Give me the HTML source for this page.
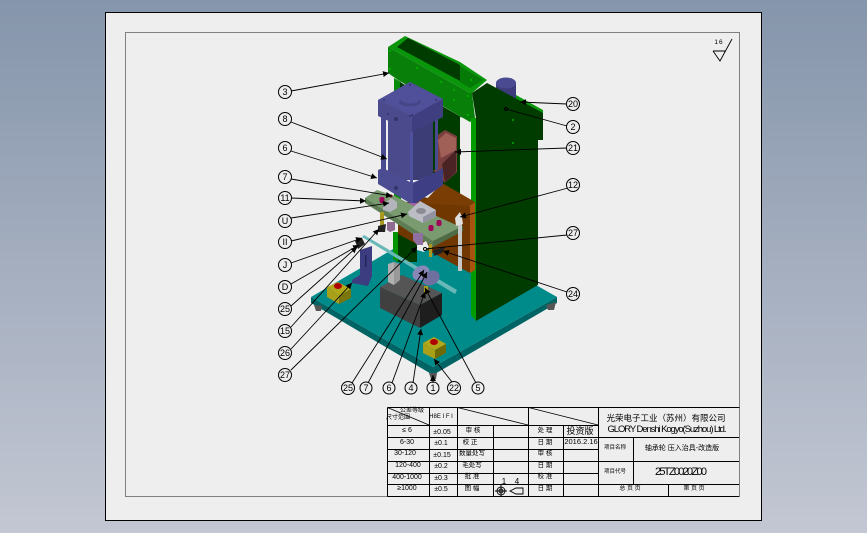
<!DOCTYPE html>
<html><head><meta charset="utf-8"><style>
html,body{margin:0;padding:0;width:867px;height:533px;overflow:hidden}
body{background:linear-gradient(180deg,#8595ab 0%,#c3c7d3 100%)}
svg{position:absolute;left:0;top:0;display:block}
.b text{font-family:"Liberation Sans",sans-serif;font-size:9px;text-anchor:middle;fill:#000}
.t text{font-family:"Liberation Sans","Noto Sans CJK SC",sans-serif;fill:#000;text-anchor:middle}
</style></head><body>
<svg width="867" height="533" viewBox="0 0 867 533">
<defs><marker id="a" markerUnits="userSpaceOnUse" markerWidth="7" markerHeight="6" refX="6" refY="3" orient="auto"><path d="M0,0 6,3 0,6Z" fill="#000"/></marker></defs>
<rect x="105.500" y="12.500" width="656" height="508" fill="#eeeeee" stroke="#000"/>
<rect x="125.500" y="32.500" width="614" height="464" fill="none" stroke="#808080"/>
<!-- base -->
<polygon points="311,297 311,303 433,375 557,303 557,297 433,367" fill="#006464"/>
<polygon points="311,297 395,248 471,248 557,297 433,367" fill="#008b8b"/>
<polygon points="314,305 322,306 321,311 316,311" fill="#555"/>
<polygon points="429,373 437,373 436,379 431,379" fill="#555"/>
<polygon points="546,305 556,302 554,310 548,310" fill="#555"/>
<!-- back posts -->
<polygon points="394,78 401,82 401,200 394,196" fill="#0a8a0a"/>
<polygon points="400,82 470,122 460,122 460,196 400,170" fill="#003c00"/>
<polygon points="460,117 471,120 471,205 460,200" fill="#eeeeee"/>
<polygon points="393,232 417,232 417,262 398,262 393,259" fill="#003c00"/>
<polygon points="393,232 398,232 398,262 393,259" fill="#009400"/>
<!-- beam -->
<polygon points="388,47 405,36 460,62 487,80 472,93 470,93" fill="#0a960a"/>
<polygon points="388,47 470,93 472,93 475,118 470,122 398,80 388,73" fill="#087f08"/>
<polygon points="397,47 408,38 460,65 460,81" fill="#003c00"/>
<polygon points="460,66 483,80 470,88 460,82" fill="#067a06"/>
<g fill="#00aa00"><circle cx="390" cy="51" r="1.200"/><circle cx="390" cy="69" r="1.200"/><circle cx="417" cy="68" r="1.200"/><circle cx="441" cy="82" r="1.200"/><circle cx="454" cy="90" r="1.200"/><circle cx="454" cy="100" r="1.200"/><circle cx="468" cy="96" r="1.200"/><circle cx="468" cy="115" r="1.200"/><circle cx="471" cy="80" r="1.200"/></g>
<!-- pin -->
<path d="M496,83 V92 L516,104 V83Z" fill="#3c3c7a"/>
<ellipse cx="506" cy="83" rx="10" ry="5.500" fill="#4a4a90"/>
<!-- right column -->
<polygon points="516,95 543,110 543,115 516,101" fill="#0a960a"/>
<polygon points="471,118 476,118 476,321 471,315" fill="#009c00"/>
<polygon points="472,93 487,83 543,113 543,140 538,140 538,285 476,321 476,118" fill="#003c00"/>
<circle cx="513" cy="120" r="1" fill="#00aa00"/><circle cx="513" cy="143" r="1" fill="#00aa00"/>
<!-- brown part -->
<polygon points="398,234 398,205 423,197 470,206 470,273" fill="#703800"/>
<polygon points="423,203 442,183 475,202 470,206" fill="#7a3e04"/>
<polygon points="470,206 475,202 475,270 470,273" fill="#a85410"/>
<!-- electronics -->
<polygon points="433,138 445,130 457,136 457,172 445,183 433,170" fill="#7a4040"/>
<polygon points="438,140 446,133 456,138 456,150 441,158" fill="#a06058"/>
<polygon points="442,164 456,150 456,172 445,183" fill="#4a2424"/>
<!-- cylinder -->
<rect x="381" y="117" width="5" height="56" fill="#4a4a90"/>
<rect x="386" y="117" width="2" height="56" fill="#eeeeee"/>
<rect x="433" y="112" width="2" height="58" fill="#003c00"/>
<rect x="435" y="110" width="3" height="60" fill="#4a4a90"/>
<rect x="388" y="118" width="45" height="62" fill="#3c3c76"/>
<rect x="388" y="118" width="22" height="62" fill="#4a4a8c"/>
<rect x="410" y="125" width="3" height="65" fill="#5050a0"/>
<polygon points="378,100 410,82 443,99 443,117 412,132 378,116" fill="#4a4a8c"/>
<polygon points="378,100 410,82 443,99 412,116" fill="#50509a"/>
<polygon points="412,116 443,99 443,117 412,132" fill="#3e3e80"/>
<ellipse cx="410" cy="102" rx="11" ry="4.500" fill="#454588"/>
<ellipse cx="410" cy="100" rx="9" ry="3.500" fill="#50509a"/>
<g fill="#33336c"><circle cx="410" cy="85" r="1"/><circle cx="384" cy="100" r="1"/><circle cx="436" cy="100" r="1"/><circle cx="412" cy="115" r="1"/><circle cx="388" cy="114" r="1"/><circle cx="410" cy="116" r="1"/><circle cx="396" cy="119" r="2"/></g>
<polygon points="378,170 383,168 412,183 433,174 443,168 443,185 413,205 378,184" fill="#4c4c92"/>
<polygon points="413,184 443,168 443,185 413,205" fill="#3e3e84"/>
<circle cx="396" cy="188" r="2" fill="#33336a"/>
<rect x="407" y="203" width="11" height="12" fill="#a060a8"/>
<!-- plate -->
<polygon points="365,198 377,190 395,196 412,205 463,228 433,245 365,202" fill="#7a9a70"/>
<polygon points="365,198 433,241 433,247 365,203" fill="#5f7d55"/>
<polygon points="433,241 463,226 463,231 433,247" fill="#4e6b46"/>
<polygon points="383,205 391,198 397,202 397,208 390,212 383,210" fill="#b4b4bc"/>
<polygon points="408,212 420,201 436,210 436,217 423,223 409,216" fill="#bcbcc4"/>
<polygon points="423,217 436,210 436,217 423,223" fill="#9292a0"/>
<ellipse cx="421" cy="211" rx="5" ry="3" fill="#8c8c94"/>
<g fill="#a0005a"><rect x="379.500" y="197" width="5" height="6" rx="2"/><rect x="428.500" y="225" width="5" height="6" rx="2"/><rect x="436.500" y="220" width="5" height="6" rx="2"/></g>
<circle cx="391" cy="196" r="1.500" fill="#800020"/>
<!-- guide posts -->
<rect x="380" y="212" width="4" height="20" fill="#a89a20"/>
<rect x="429" y="244" width="3" height="13" fill="#a89a20"/>
<rect x="458" y="215" width="4" height="56" fill="#c8c8c8"/>
<polygon points="455,218 460,212 462,218 463,224 456,226" fill="#e0e0e0"/>
<polygon points="417,246 426,241 429,247 424,252 417,250" fill="#eeeeee"/>
<polygon points="433,250 445,247 442,253 434,256" fill="#202020"/>
<polygon points="387,222 395,222 395,230 390,232 387,230" fill="#8f6b90"/>
<polygon points="413,233 423,233 423,245 417,245 413,240" fill="#9070a0"/>
<polygon points="378,226 386,224 385,232 378,232" fill="#222"/>
<!-- black block -->
<polygon points="380,287 402,275 442,293 420,305" fill="#555"/>
<polygon points="380,287 420,305 420,328 380,308" fill="#404040"/>
<polygon points="420,305 442,293 442,315 420,328" fill="#1e1e1e"/>
<polygon points="388,264 394,262 394,285 388,282" fill="#b0b0b0"/>
<polygon points="394,262 400,264 400,280 394,285" fill="#999"/>
<!-- rod -->
<polygon points="362,237 364,235 457,290 455,294" fill="#68b8b8"/>
<!-- bracket -->
<polygon points="360,250 372,246 372,276 368,286 352,283 352,280 360,275" fill="#3c3c80"/>
<rect x="365" y="255" width="1.500" height="12" fill="#25255a"/>
<polygon points="355,241 362,238 365,244 358,249" fill="#222"/>
<!-- hub -->
<ellipse cx="421" cy="273" rx="9" ry="7" fill="#8888b8" transform="rotate(-30 421 273)"/>
<ellipse cx="431" cy="278" rx="9" ry="7" fill="#7070a0" transform="rotate(-30 431 278)"/>
<rect x="424" y="286" width="4" height="8" fill="#a89a20"/>
<!-- yellow boxes -->
<polygon points="327,287 339,296 339,304 327,297" fill="#a8a018"/>
<polygon points="327,287 338,282 351,289 339,296" fill="#b0a818"/>
<polygon points="339,296 351,289 351,298 339,304" fill="#7a760c"/>
<ellipse cx="338" cy="286" rx="4" ry="3" fill="#b00000"/>
<polygon points="423,343 435,350 435,359 423,353" fill="#a8a018"/>
<polygon points="423,343 434,337 446,344 435,350" fill="#b0a818"/>
<polygon points="435,350 446,344 446,353 435,359" fill="#6e6a08"/>
<ellipse cx="434" cy="342" rx="4" ry="3" fill="#b00000"/>
<!-- leaders -->
<g stroke="#000" stroke-width=".9" fill="none">
<path d="M291,91 389,73" marker-end="url(#a)"/><path d="M291,122 387,159" marker-end="url(#a)"/><path d="M291,151 377,178" marker-end="url(#a)"/><path d="M291,179 392,196" marker-end="url(#a)"/><path d="M291,198 366,201" marker-end="url(#a)"/><path d="M291,218 389,203" marker-end="url(#a)"/><path d="M291,241 407,214" marker-end="url(#a)"/><path d="M291,263 362,238" marker-end="url(#a)"/><path d="M291,284 359,245" marker-end="url(#a)"/><path d="M291,306 357,247" marker-end="url(#a)"/><path d="M291,327 379,229" marker-end="url(#a)"/><path d="M291,349 352,283" marker-end="url(#a)"/><path d="M291,370 417,247" marker-end="url(#a)"/><path d="M352,383 424,270" marker-end="url(#a)"/><path d="M368,383 427,272" marker-end="url(#a)"/><path d="M392,383 425,292" marker-end="url(#a)"/><path d="M413,383 421,329" marker-end="url(#a)"/><path d="M433,383 433,375" marker-end="url(#a)"/><path d="M452,382 434,359" marker-end="url(#a)"/><path d="M476,383 425,288" marker-end="url(#a)"/><path d="M567,104 520,102" marker-end="url(#a)"/><path d="M567,148 455,152" marker-end="url(#a)"/><path d="M568,188 460,217" marker-end="url(#a)"/><path d="M567,292 443,251" marker-end="url(#a)"/>
</g>
<path d="M567,126 506,109M567,235 425,249" stroke="#000" stroke-width=".9" fill="none"/>
<circle cx="506" cy="109" r="1.500" fill="none" stroke="#000"/><circle cx="425" cy="249" r="1.500" fill="#fff" stroke="#000"/>
<!-- balloons -->
<g class="b">
<g fill="none" stroke="#000">
<circle cx="285" cy="92" r="6.500"/><circle cx="285" cy="119" r="6.500"/><circle cx="285" cy="148" r="6.500"/><circle cx="285" cy="177" r="6.500"/><circle cx="285" cy="198" r="6.500"/><circle cx="285" cy="221" r="6.500"/><circle cx="285" cy="242" r="6.500"/><circle cx="285" cy="265" r="6.500"/><circle cx="285" cy="287" r="6.500"/><circle cx="285" cy="309" r="6.500"/><circle cx="285" cy="331" r="6.500"/><circle cx="285" cy="353" r="6.500"/><circle cx="285" cy="375" r="6.500"/>
<circle cx="348" cy="388" r="6.500"/><circle cx="366" cy="388" r="6"/><circle cx="389" cy="388" r="6"/><circle cx="411" cy="388" r="6"/><circle cx="433" cy="388" r="6"/><circle cx="454" cy="388" r="6.500"/><circle cx="478" cy="388" r="6"/>
<circle cx="573" cy="104" r="6.500"/><circle cx="573" cy="127" r="6.500"/><circle cx="573" cy="148" r="6.500"/><circle cx="573" cy="185" r="6.500"/><circle cx="573" cy="233" r="6.500"/><circle cx="573" cy="294" r="6.500"/>
</g>
<text x="285" y="95">3</text><text x="285" y="122">8</text><text x="285" y="151">6</text><text x="285" y="180">7</text><text x="285" y="201">11</text><text x="285" y="224">U</text><text x="285" y="245">II</text><text x="285" y="268">J</text><text x="285" y="290">D</text><text x="285" y="312">25</text><text x="285" y="334">15</text><text x="285" y="356">26</text><text x="285" y="378">27</text>
<text x="348" y="391">25</text><text x="366" y="391">7</text><text x="389" y="391">6</text><text x="411" y="391">4</text><text x="433" y="391">1</text><text x="454" y="391">22</text><text x="478" y="391">5</text>
<text x="573" y="107">20</text><text x="573" y="130">2</text><text x="573" y="151">21</text><text x="573" y="188">12</text><text x="573" y="236">27</text><text x="573" y="297">24</text>
</g>
<!-- roughness -->
<path d="M713,51H726M713,51 720,61 732,39" stroke="#000" fill="none" stroke-width=".9"/>
<text x="719" y="44" font-family="Liberation Sans" font-size="6.500" text-anchor="middle" letter-spacing="1">16</text>
<!-- title block -->
<g stroke="#000" stroke-width="1" fill="none">
<path d="M387.500,407.500H739.500M387.500,407.500V496.500M387.500,425.500H598M387.500,437.500H739M387.500,449.500H598M387.500,461.500H739M387.500,473.500H598M387.500,484.500H739M387.500,496.500H739"/>
<path d="M429.500,407V497M457.500,407V497M493.500,425V497M528.500,407V497M563.500,425V497M598.500,407V497M633.500,437V484M668.500,484V497"/>
<path d="M387.500,407.500 429,425M457.500,407.500 528,425M528.500,407.500 598,425" stroke-width=".9"/>
</g>
<g class="t" font-size="7">
<text x="412" y="412" font-size="6">公差等级</text><text x="398" y="419" font-size="6">尺寸范围</text><text x="441" y="418" font-size="6">H8E I F I</text>
<text x="407" y="432">≤ 6</text><text x="407" y="444">6-30</text><text x="405" y="455">30-120</text><text x="408" y="467">120-400</text><text x="407" y="479">400-1000</text><text x="407" y="490">≥1000</text>
<text x="442" y="434">±0.05</text><text x="441" y="445">±0.1</text><text x="442" y="457">±0.15</text><text x="441" y="468">±0.2</text><text x="441" y="480">±0.3</text><text x="441" y="491">±0.5</text>
<text x="473" y="432" font-size="6.500">审 核</text><text x="470" y="444" font-size="6.500">校 正</text><text x="472" y="455" font-size="6.500">数量处写</text><text x="472" y="467" font-size="6.500">毛处写</text><text x="472" y="478" font-size="6.500">批 准</text><text x="472" y="490" font-size="6.500">图 幅</text>
<text x="545" y="432" font-size="6.500">处 理</text><text x="545" y="444" font-size="6.500">日 期</text><text x="545" y="455" font-size="6.500">审 核</text><text x="545" y="467" font-size="6.500">日 期</text><text x="545" y="478" font-size="6.500">校 准</text><text x="545" y="490" font-size="6.500">日 期</text>
<text x="580" y="434" font-size="9">投资版</text><text x="581" y="444" font-size="7.500">2016.2.16</text>
<text x="504" y="484" font-size="8">1</text><text x="517" y="484" font-size="8">4</text>
<text x="666" y="421" font-size="8.500">光荣电子工业（苏州）有限公司</text>
<text x="667" y="432" font-size="9.500" textLength="119">GLORY Denshi Kogyo(Suzhou) Ltd.</text>
<text x="615" y="449" font-size="5.500">项目名称</text><text x="615" y="473" font-size="5.500">项目代号</text>
<text x="682" y="450" font-size="7">轴承轮 压入治具-改造版</text>
<text x="681" y="475" font-size="11" textLength="52">25TZ0020Z00</text>
<text x="630" y="490" font-size="6">总  页 页</text><text x="694" y="490" font-size="6">第  页 页</text>
</g>
<g stroke="#000" stroke-width=".9" fill="none">
<circle cx="501" cy="491" r="4"/><circle cx="501" cy="491" r="2"/><path d="M495,491H507M501,485V497"/>
<path d="M510,491 516,488H523V494H516Z"/>
</g>
</svg>
</body></html>
